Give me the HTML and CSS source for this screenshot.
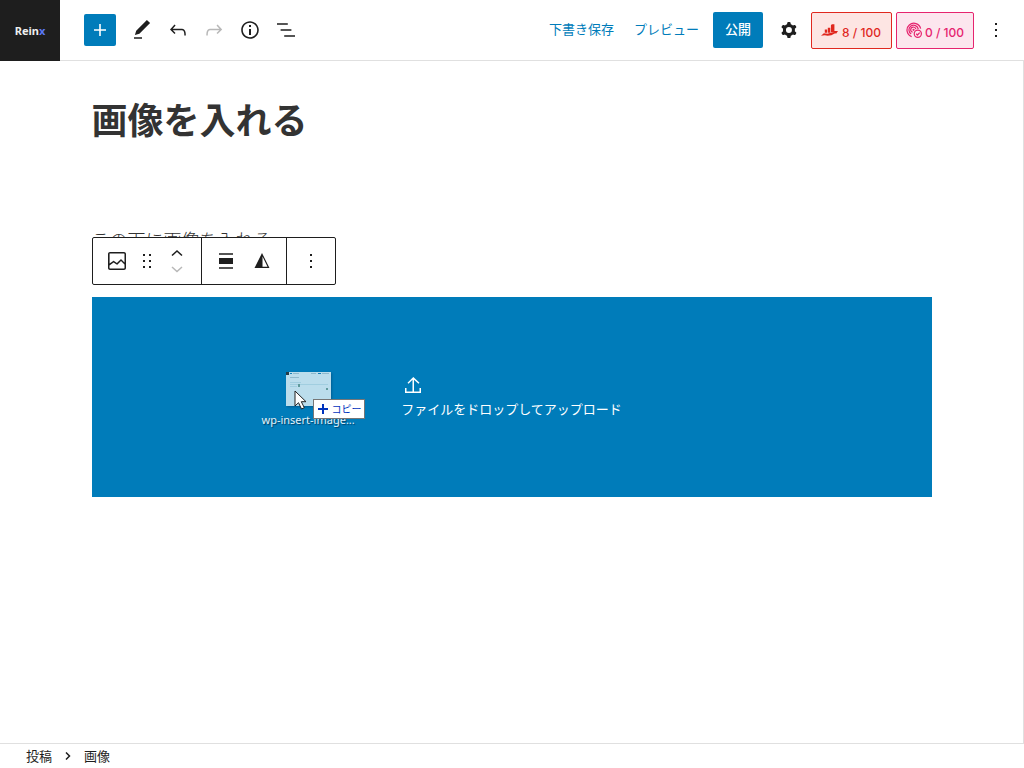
FILE: index.html
```html
<!DOCTYPE html>
<html lang="ja">
<head>
<meta charset="utf-8">
<meta name="viewport" content="width=device-width, initial-scale=1">
<title>画像を入れる</title>
<link rel="stylesheet" href="styles.css">
</head>
<body>
<div class="editor">
  <header class="header">
    <a class="logo" href="#">Rein<span class="logo-accent">x</span></a>
    <div class="tools">
      <button class="inserter" type="button" aria-label="ブロックを追加"><svg viewBox="0 0 24 24"><path d="M18 11.2h-5.2V6h-1.6v5.2H6v1.6h5.2V18h1.6v-5.2H18z"/></svg></button>
      <button class="icon-button" type="button" aria-label="ツール"><svg viewBox="0 0 24 24"><path d="M20.1 5.1L16.9 2 6.2 12.7l-1.3 4.4 4.5-1.3L20.1 5.1zM4 20.8h8v-1.5H4v1.5z"/></svg></button>
      <button class="icon-button" type="button" aria-label="元に戻す"><svg viewBox="0 0 24 24"><path d="M18.3 11.7c-.6-.6-1.4-.9-2.3-.9H6.7l2.9-3.3-1.1-1-4.5 5L8.5 16l1-1-2.7-2.7H16c.5 0 .9.2 1.3.5 1 1 1 3.4 1 4.5v.3h1.5v-.2c0-1.5 0-4.3-1.5-5.7z"/></svg></button>
      <button class="icon-button" type="button" disabled aria-label="やり直す"><svg viewBox="0 0 24 24"><path d="M15.6 6.5l-1.1 1 2.9 3.3H8c-.9 0-1.7.3-2.3.9-1.4 1.5-1.4 4.2-1.4 5.6v.2h1.5v-.3c0-1.1 0-3.5 1-4.5.3-.3.7-.5 1.3-.5h9.2L14.5 15l1.1 1.1 4.6-4.6-4.6-5z"/></svg></button>
      <button class="icon-button" type="button" aria-label="詳細"><svg viewBox="0 0 24 24"><path d="M12 3.2c-4.8 0-8.8 3.9-8.8 8.8 0 4.8 3.9 8.8 8.8 8.8 4.8 0 8.8-3.9 8.8-8.8 0-4.8-4-8.8-8.8-8.8zm0 16c-4 0-7.2-3.3-7.2-7.2C4.8 8 8 4.8 12 4.8s7.2 3.3 7.2 7.2c0 4-3.2 7.2-7.2 7.2zM11 17h2v-6h-2v6zm0-8h2V7h-2v2z"/></svg></button>
      <button class="icon-button" type="button" aria-label="リスト表示"><svg viewBox="0 0 24 24"><path d="M13.8 5.2H3v1.5h10.8V5.2zm-3.6 12v1.5H21v-1.5H10.2zm7.2-6H6.6v1.5h10.8v-1.5z"/></svg></button>
    </div>
    <div class="settings">
      <button class="text-button" type="button">下書き保存</button>
      <button class="text-button" type="button">プレビュー</button>
      <button class="publish" type="button">公開</button>
      <button class="gear" type="button" aria-label="設定"><svg viewBox="0 0 24 24"><path fill-rule="evenodd" d="M10.289 4.836A1 1 0 0111.275 4h1.306a1 1 0 01.987.836l.244 1.466c.787.260 1.503.679 2.108 1.218l1.393-.522a1 1 0 011.216.437l.653 1.130a1 1 0 01-.230 1.273l-1.148.944a6.025 6.025 0 010 2.435l1.149.946a1 1 0 01.230 1.272l-.653 1.130a1 1 0 01-1.216.437l-1.394-.522c-.605.540-1.320.958-2.108 1.218l-.244 1.466a1 1 0 01-.987.836h-1.306a1 1 0 01-.986-.836l-.244-1.466a5.995 5.995 0 01-2.108-1.218l-1.394.522a1 1 0 01-1.217-.436l-.653-1.131a1 1 0 01.230-1.272l1.149-.946a6.026 6.026 0 010-2.435l-1.148-.944a1 1 0 01-.230-1.272l.653-1.131a1 1 0 011.217-.437l1.393.522a5.994 5.994 0 012.108-1.218l.244-1.466zM14.929 12a3 3 0 11-6 0 3 3 0 016 0z"/></svg></button>
      <div class="scores">
        <button class="score score-seo" type="button"><svg viewBox="0 0 18 16"><path d="M4 7h2.500v3.500H4zM7.200 5h2.600v5.500H7.200zM10.500 2.500l1-1h2.700v8h-3.700zM0 13.500l3-2.500 4 .500 4-1.500 3-.500-.500-1H18l-2 3-1-.500-4 2-4 .500-3-.500z"/></svg>8 / 100</button>
        <button class="score score-ai" type="button"><svg viewBox="0 0 18 18"><g fill="none" stroke="currentColor" stroke-width="1.3"><path d="M6 15.500A7.300 7.300 0 1 1 15.500 7"/><path d="M5.500 12.700A5 5 0 1 1 13 7.500"/><path d="M7 10.800A2.800 2.800 0 1 1 10.500 7.500"/><circle cx="12.500" cy="12.500" r="3.800"/><path d="M10.800 12.500l1.300 1.300 2.400-2.500"/></g><circle cx="8" cy="8.300" r="1.200"/></svg>0 / 100</button>
      </div>
      <button class="icon-button" type="button" aria-label="オプション"><svg viewBox="0 0 24 24"><path d="M13 19h-2v-2h2v2zm0-6h-2v-2h2v2zm0-6h-2V5h2v2z"/></svg></button>
    </div>
  </header>

  <main class="canvas">
    <div class="content">
      <h1 class="title">画像を入れる</h1>
      <p class="paragraph">この下に画像を入れる</p>
      <section class="image-block">
        <div class="toolbar" role="toolbar" aria-label="ブロックツール">
          <div class="toolbar-group">
            <button class="tool tool-type" type="button" aria-label="画像"><svg viewBox="0 0 24 24"><path d="M19 3H5c-1.100 0-2 .900-2 2v14c0 1.100.900 2 2 2h14c1.100 0 2-.900 2-2V5c0-1.100-.900-2-2-2zM5 4.500h14c.300 0 .500.200.500.500v8.400l-3-2.900c-.300-.300-.800-.300-1 0L11.900 14 9 12c-.300-.200-.600-.200-.800 0l-3.600 2.600V5c-.100-.300.100-.500.400-.500zm14 15H5c-.300 0-.500-.200-.500-.500v-2.400l4.100-3 3 1.900c.300.200.700.200.900-.100L16 12l3.500 3.400V19c0 .300-.200.500-.500.500z"/></svg></button>
            <button class="tool tool-drag" type="button" aria-label="ドラッグ"><svg viewBox="6 0 12 24"><path d="M8 5h2v2H8zm6 0h2v2h-2zM8 11h2v2H8zm6 0h2v2h-2zM8 17h2v2H8zm6 0h2v2h-2z"/></svg></button>
            <div class="movers">
              <button class="mover" type="button" aria-label="上に移動"><svg viewBox="0 0 14 8"><path d="M2 6.500l5-4.500 5 4.500"/></svg></button>
              <button class="mover" type="button" disabled aria-label="下に移動"><svg viewBox="0 0 14 8"><path d="M2 2l5 4.500L12 2"/></svg></button>
            </div>
          </div>
          <div class="toolbar-group toolbar-format">
            <button class="tool" type="button" aria-label="配置"><svg viewBox="0 0 24 24"><path d="M5 15h14V9H5v6zm0 4.800h14v-1.500H5v1.500zM5 4.200v1.500h14V4.200H5z"/></svg></button>
            <button class="tool" type="button" aria-label="デュオトーン"><svg viewBox="0 0 24 24"><path fill-rule="evenodd" d="M12 4L4.500 19h15zM12.500 7.500V17.700h5z"/></svg></button>
          </div>
          <div class="toolbar-group">
            <button class="tool tool-more" type="button" aria-label="オプション"><svg viewBox="0 0 24 24"><path d="M13 19h-2v-2h2v2zm0-6h-2v-2h2v2zm0-6h-2V5h2v2z"/></svg></button>
          </div>
        </div>
        <div class="dropzone">
          <div class="drop-message">
            <svg class="upload-icon" viewBox="0 0 24 24"><path d="M18.500 15v3.500H13V6.700l4.500 4.100 1-1.100-6.200-5.800-5.800 5.800 1 1.100 4-4v11.700h-6V15H4v5h16v-5z"/></svg>
            <span>ファイルをドロップしてアップロード</span>
          </div>
          <div class="drag-ghost">
            <svg class="thumb" viewBox="0 0 45 34"><path fill="#bbddec" d="M0 0h45v34H0z"/><path fill="#263c48" d="M0 0h3v3H0z"/><path fill="#187fb5" d="M4 1h2v1H4zM32 1h3v1h-3z"/><path fill="#8fb9cc" d="M7 1h6v1H7zM25 1h5v1h-5zM36 1h7v1h-7zM4 5h9v1H4z"/><path fill="#a1cee0" d="M4 10h11v1H4zM4 12h38v1H4zM4 14h7v1H4z"/><path fill="#5f9a9c" d="M12 12h2v3h-2zM40 16h2v2h-2z"/></svg>
            <span class="file-name">wp-insert-image...</span>
            <svg class="cursor" viewBox="0 0 13 20"><path fill="#fff" stroke="#222" d="M1 1v15l3.500-3.300L7.500 19l2.800-1.300-3-6H12z"/></svg>
            <span class="copy-tip"><svg viewBox="0 0 10 10"><path d="M4 0h2v4h4v2H6v4H4V6H0V4h4z"/></svg>コピー</span>
          </div>
        </div>
      </section>
    </div>
  </main>

  <footer class="footer">
    <nav class="breadcrumb" aria-label="パンくず">
      <a href="#">投稿</a>
      <svg viewBox="0 0 6 8"><path d="M1 .500L4.500 4 1 7.500"/></svg>
      <a href="#">画像</a>
    </nav>
  </footer>
</div>
</body>
</html>
```
FILE: styles.css
```css
* { box-sizing: border-box; }

body {
  margin: 0;
  background: #fff;
  color: #1e1e1e;
  font-family: "Noto Sans", "Noto Sans CJK JP", sans-serif;
  font-size: 13px;
  line-height: 20px;
}

button {
  margin: 0;
  padding: 0;
  border: 0;
  background: none;
  color: inherit;
  font: inherit;
}

a { color: inherit; text-decoration: none; }

svg { display: block; flex: none; fill: currentColor; }

.editor { display: flex; flex-direction: column; min-height: 100vh; }

.header {
  display: flex;
  justify-content: space-between;
  border-bottom: 1px solid #e0e0e0;
}

.logo {
  display: flex;
  align-items: center;
  justify-content: center;
  width: 60px;
  height: 61px;
  margin-bottom: -1px;
  background: #1e1e1e;
  color: #eee;
  font-family: "Noto Sans", sans-serif;
  font-size: 11px;
  font-weight: 700;
}

.logo-accent { color: #5b78f5; }

.tools {
  display: flex;
  align-items: center;
  margin-left: 24px;
  margin-right: auto;
}

.inserter {
  display: grid;
  place-items: center;
  width: 32px;
  height: 32px;
  margin-right: 8px;
  border-radius: 2px;
  background: #007cba;
  color: #fff;
}

.inserter svg,
.icon-button svg,
.gear svg,
.tool svg { width: 24px; height: 24px; }

.icon-button {
  display: grid;
  place-items: center;
  width: 36px;
  height: 36px;
}

.icon-button:disabled,
.mover:disabled { color: #b8b8b8; }

.settings {
  display: flex;
  align-items: center;
  padding-right: 10px;
}

.text-button {
  height: 22px;
  margin-right: 20px;
  padding-bottom: 2px;
  color: #007cba;
  white-space: nowrap;
}

.text-button + .publish { margin-left: -6px; }

.publish {
  width: 50px;
  height: 36px;
  padding-bottom: 2px;
  border-radius: 2px;
  background: #007cba;
  color: #fff;
  font-weight: 500;
}

.gear {
  display: grid;
  place-items: center;
  width: 24px;
  height: 36px;
  margin: 0 10px 0 14px;
}

.scores { display: flex; gap: 4px; margin-right: 4px; }

.score {
  display: flex;
  align-items: center;
  gap: 4px;
  height: 37px;
  padding: 5px 9px 0;
  border: 1px solid;
  border-radius: 2px;
  font-family: Inter, sans-serif;
  font-size: 12px;
  font-weight: 500;
  white-space: nowrap;
}

.score svg { width: 17px; height: 17px; margin-bottom: 5px; }
.score-seo { padding-right: 10px; background: #fde5e3; color: #e0281f; }
.score-ai { gap: 2px; background: #fce6ee; color: #e6246f; }

.canvas {
  flex: 1;
  padding: 33px 24px;
  border-right: 1px solid #e0e0e0;
}

.content { max-width: 840px; margin: 0 auto; }

.title {
  margin: 0;
  color: #333;
  font-size: 36px;
  font-weight: 700;
  line-height: 54px;
}

.paragraph {
  margin: 76px 0 0;
  color: #333;
  font-size: 18px;
  font-weight: 300;
  line-height: 32px;
}

.image-block { position: relative; margin-top: 41px; }

.toolbar {
  position: absolute;
  bottom: calc(100% + 12px);
  left: 0;
  display: flex;
  height: 48px;
  border: 1px solid #1e1e1e;
  border-radius: 2px;
  background: #fff;
}

.toolbar-group { display: flex; align-items: center; }
.toolbar-group + .toolbar-group { border-left: 1px solid #1e1e1e; }
.toolbar-format { padding: 0 6px; }

.tool {
  display: grid;
  place-items: center;
  width: 36px;
  height: 46px;
}

.tool-type { width: 48px; }
.tool-drag { width: 12px; }
.tool.tool-drag svg { width: 12px; }
.tool-more { width: 48px; }

.movers { width: 48px; }

.mover {
  display: grid;
  place-items: center;
  width: 100%;
  height: 16px;
}

.mover svg { width: 14px; height: 8px; }

.mover path,
.breadcrumb path { fill: none; stroke: currentColor; stroke-width: 1.5; }

.dropzone {
  position: relative;
  display: flex;
  align-items: center;
  justify-content: center;
  min-height: 200px;
  background: #007cba;
  color: #fff;
}

.drop-message { padding-bottom: 2px; white-space: nowrap; }
.upload-icon { width: 24px; height: 24px; margin-bottom: 2px; }

.drag-ghost {
  position: absolute;
  top: 75px;
  left: 170px;
  width: 104px;
}

.thumb {
  width: 45px;
  height: 34px;
  margin-left: 24px;
  box-shadow: 1px 1px 2px #005f94;
}

.file-name {
  display: block;
  margin-top: 4px;
  color: #e2f2fa;
  font-family: "Noto Sans", sans-serif;
  font-size: 11px;
  text-shadow: 1px 1px 1px #003f66;
  white-space: nowrap;
}

.cursor {
  position: absolute;
  top: 18px;
  left: 32px;
  width: 13px;
  height: 20px;
}

.copy-tip {
  position: absolute;
  top: 27px;
  left: 51px;
  display: flex;
  align-items: center;
  gap: 4px;
  width: 52px;
  height: 20px;
  padding-left: 4px;
  border: 1px solid #767676;
  background: #fff;
  color: #0033bd;
  font-size: 10px;
  white-space: nowrap;
}

.copy-tip svg { width: 10px; height: 10px; }

.footer {
  padding: 2px 26px;
  border-top: 1px solid #e0e0e0;
}

.breadcrumb { display: flex; align-items: center; gap: 13px; }
.breadcrumb svg { width: 6px; height: 8px; }
```
